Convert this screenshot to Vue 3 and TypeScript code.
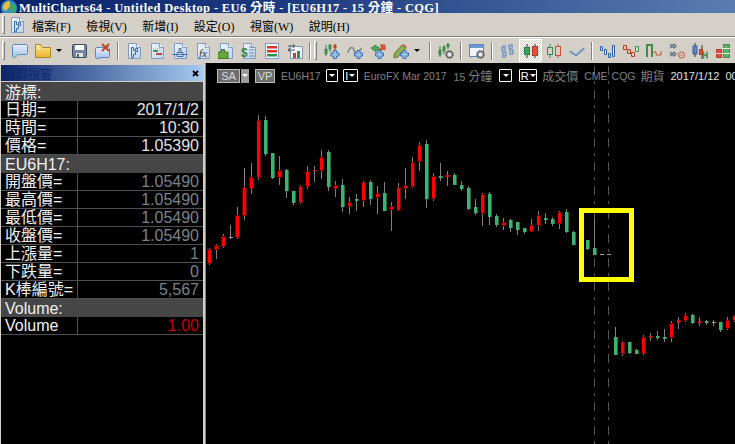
<script setup lang="ts">
/**
 * MultiCharts window: title/menu/toolbar chrome, the data window on the left
 * and the candlestick chart on the right.
 */
type Bar = {
  x: number;
  wickTop: number;
  wickBottom: number;
  bodyTop: number;
  bodyHeight: number;
  cap: number;
  leftEdge: boolean;
  fill: string;
  edge: string;
};
type Raw = [number, number, number, number, string];

// Bars were read off 3x crops, so the values are in third-pixels.
const toBars = (startX: number, originY: number, raw: Raw[], leftEdgeUntil = 0): Bar[] =>
  raw.map(([wt, bt, bb, wb, c], i) => {
    const y = (v: number) => Math.round(originY + v / 3);
    const bodyTop = y(bt);
    const bodyHeight = Math.max(1, y(bb) - bodyTop);
    return {
      x: startX + i * 7,
      wickTop: y(wt),
      wickBottom: y(wb),
      bodyTop,
      bodyHeight,
      cap: c === "r" && bodyHeight >= 4 ? 1 : 0,
      leftEdge: c === "r" && i < leftEdgeUntil,
      fill: c === "r" ? "#ff0000" : c === "g" ? "#3cb371" : "#a0a0a0",
      edge: c === "r" ? "#700000" : c === "g" ? "#1f6b45" : "#a0a0a0",
    };
  });

const firstRun = toBars(209, 100, [
  [445, 447, 493, 495, "r"], [433, 435, 450, 477, "r"], [403, 407, 441, 443, "r"], [375, 412, 415, 417, "n"],
  [321, 345, 415, 417, "r"], [205, 261, 348, 360, "r"], [189, 232, 267, 282, "r"], [45, 60, 235, 240, "r"],
  [48, 60, 162, 168, "g"], [159, 159, 235, 237, "g"], [168, 209, 234, 255, "r"], [208, 209, 273, 294, "g"],
  [273, 273, 309, 315, "g"], [255, 258, 310, 312, "r"], [198, 213, 261, 266, "r"], [198, 209, 213, 246, "r"],
  [150, 171, 213, 237, "r"], [150, 156, 261, 273, "g"], [243, 255, 267, 291, "r"], [237, 255, 321, 336, "g"],
  [291, 306, 321, 342, "r"], [282, 297, 303, 333, "g"], [243, 246, 303, 321, "r"], [240, 246, 297, 315, "g"],
  [258, 279, 295, 342, "r"], [246, 279, 333, 333, "g"], [306, 318, 330, 393, "r"],
], 7);

const secondRun = toBars(398, 130, [
  [159, 171, 243, 243, "r"], [114, 165, 177, 207, "r"], [81, 96, 171, 174, "r"], [36, 45, 96, 123, "r"],
  [30, 42, 207, 234, "g"], [129, 138, 207, 213, "r"], [99, 138, 144, 153, "g"], [123, 135, 141, 168, "r"],
  [129, 135, 165, 165, "g"], [153, 165, 177, 183, "g"], [168, 174, 237, 240, "g"], [207, 231, 249, 255, "g"],
  [189, 192, 252, 288, "r"], [186, 192, 261, 285, "g"], [252, 258, 285, 291, "g"], [264, 276, 288, 300, "r"],
  [267, 270, 294, 306, "g"], [276, 276, 300, 315, "g"], [294, 294, 306, 312, "g"], [267, 285, 306, 306, "r"],
  [243, 255, 288, 303, "r"], [249, 264, 270, 282, "g"], [261, 267, 282, 288, "g"], [243, 246, 282, 297, "r"],
  [237, 246, 306, 309, "g"], [303, 306, 345, 345, "g"],
]);

const lastBars = toBars(587, 130, [
  [330, 330, 357, 360, "g"], [264, 354, 375, 375, "g"],
]);

const afterGap = toBars(615, 300, [
  [81, 111, 165, 165, "g"], [123, 126, 162, 168, "r"], [126, 126, 159, 161, "g"], [147, 150, 162, 162, "g"],
  [105, 111, 162, 165, "r"], [99, 107, 115, 123, "r"], [93, 108, 114, 120, "g"], [87, 111, 117, 126, "g"],
  [63, 69, 114, 126, "r"], [51, 60, 69, 87, "r"], [40, 45, 63, 65, "r"], [42, 45, 69, 72, "g"],
  [51, 63, 69, 78, "r"], [60, 63, 69, 75, "g"], [60, 67, 69, 78, "n"], [66, 66, 90, 96, "g"],
  [51, 60, 87, 90, "r"], [45, 45, 63, 66, "r"],
]);

const bars = [...firstRun, ...secondRun, ...lastBars, ...afterGap];

const menus = ["檔案(F)", "檢視(V)", "新增(I)", "設定(O)", "視窗(W)", "說明(H)"];

type Tool = { kind: "icon" | "caret" | "sep" | "grip"; id?: string; on?: boolean };
const icon = (id: string, on = false): Tool => ({ kind: "icon", id, on });
const tools: Tool[] = [
  { kind: "grip" },
  icon("new"), icon("folder"), { kind: "caret" }, icon("save"), icon("del"),
  { kind: "sep" },
  icon("study"), icon("sig"), icon("scale"), icon("fx"), icon("puzzle"), icon("dollar"), icon("list"), icon("swap"),
  { kind: "sep" },
  { kind: "grip" },
  icon("addstudy"), icon("addwave"), icon("addarrow"), icon("addpen"), { kind: "caret" },
  { kind: "sep" },
  icon("gearbars"),
  { kind: "sep" },
  icon("gearwin"),
  { kind: "sep" },
  icon("ohlc"), icon("candle", true), icon("hollow"), icon("line"),
  { kind: "sep" },
  icon("pf"), icon("pfred"), icon("step"), icon("dots"), icon("mix"), icon("stack"),
];

type Row = { label: string; value?: string; tone?: string; head?: boolean };
const rows: Row[] = [
  { label: "游標:", head: true },
  { label: "日期=", value: "2017/1/2", tone: "bright" },
  { label: "時間=", value: "10:30", tone: "bright" },
  { label: "價格=", value: "1.05390", tone: "bright" },
  { label: "EU6H17:", head: true },
  { label: "開盤價=", value: "1.05490" },
  { label: "最高價=", value: "1.05490" },
  { label: "最低價=", value: "1.05490" },
  { label: "收盤價=", value: "1.05490" },
  { label: "上漲量=", value: "1" },
  { label: "下跌量=", value: "0" },
  { label: "K棒編號=", value: "5,567" },
  { label: "Volume:", head: true },
  { label: "Volume", value: "1.00", tone: "red" },
];
</script>

<template>
  <div class="app">
    <svg class="defs" width="0" height="0" aria-hidden="true">
      <defs>
        <linearGradient id="pg" x1="0" y1="0" x2="1" y2="1">
          <stop offset="0" stop-color="#f2f6fd" />
          <stop offset="1" stop-color="#bcd0ee" />
        </linearGradient>
        <linearGradient id="bub" x1="0" y1="0" x2="0" y2="1">
          <stop offset="0" stop-color="#e6effb" />
          <stop offset="1" stop-color="#a4c2ec" />
        </linearGradient>
        <linearGradient id="fold" x1="0" y1="0" x2="0" y2="1">
          <stop offset="0" stop-color="#ffe68c" />
          <stop offset="1" stop-color="#e9b22e" />
        </linearGradient>
        <symbol id="doc" viewBox="0 0 16 16">
          <path d="M2.5.5h8l4 4v11h-12z" fill="url(#pg)" stroke="#7f9bc6" />
          <path d="M10.5.5v4h4" fill="#fff" stroke="#7f9bc6" />
        </symbol>
        <symbol id="new" viewBox="0 0 16 16">
          <path d="M1.500 1.500h13l1 1v8l-1 1H6l-3 3H1.500l-1-1v-11z" fill="url(#bub)" stroke="#5b86c4" />
        </symbol>
        <symbol id="folder" viewBox="0 0 16 16">
          <path d="M.5 1.500h5l2 3h8v10H.5z" fill="url(#fold)" stroke="#a8872a" />
          <path d="M1.500 5.500h5" stroke="#fff0b0" />
        </symbol>
        <symbol id="save" viewBox="0 0 16 16">
          <rect x=".5" y="1.500" width="14" height="13" rx="1" fill="#75869c" stroke="#3f4c5f" />
          <rect x="3" y="2" width="9" height="5" fill="#fff" />
          <rect x="4" y="10" width="7" height="4" fill="#dfe4ea" />
          <rect x="5" y="11" width="2" height="3" fill="#4d5b70" />
        </symbol>
        <symbol id="del" viewBox="0 0 16 16">
          <path d="M1.500 4.500h12l1 1v8l-1 1H6l-3 1H1.500l-1-1v-9z" fill="url(#bub)" stroke="#5b86c4" />
          <path d="M7 1l7 7M14 1L7 8" stroke="#b5482f" stroke-width="2" />
        </symbol>
        <symbol id="study" viewBox="0 0 16 16">
          <use href="#doc" width="16" height="16" />
          <path d="M5.500 4.500h2v3h2v-2h2v3h-2v3h-2v3h-2z" fill="#cfe0f7" stroke="#356bb0" />
        </symbol>
        <symbol id="sig" viewBox="0 0 16 16">
          <use href="#doc" width="16" height="16" />
          <path d="M4 6h8" stroke="#9aa8bb" stroke-dasharray="1 1" />
          <rect x="4" y="7" width="5" height="2" fill="#45994a" />
          <rect x="7" y="10" width="6" height="2" fill="#b84a3a" />
        </symbol>
        <symbol id="scale" viewBox="0 0 16 16">
          <use href="#doc" width="16" height="16" />
          <path d="M.5 11.500h15M5 9.500h6v4H5zM7 5.500h2v4H7z" fill="#cfe0f7" stroke="#3f6fb0" />
        </symbol>
        <symbol id="fx" viewBox="0 0 16 16">
          <use href="#doc" width="16" height="16" />
          <text x="4" y="14" font-family="Liberation Serif, serif" font-style="italic" font-size="11" fill="#333">fx</text>
        </symbol>
        <symbol id="puzzle" viewBox="0 0 16 16">
          <use href="#doc" width="16" height="16" />
          <path d="M0 9h3.500V6.500h3V9H10v6.500H0z" fill="#66a63a" stroke="#3d7a20" />
        </symbol>
        <symbol id="dollar" viewBox="0 0 16 16">
          <use href="#doc" width="16" height="16" />
          <path d="M8 4h5M8 7h5M8 10h5M8 13h5" stroke="#6f86a8" />
          <text x="0" y="14" font-family="Liberation Sans, sans-serif" font-weight="700" font-size="12" fill="#3f8a3a">$</text>
        </symbol>
        <symbol id="list" viewBox="0 0 16 16">
          <rect x="1.500" y=".5" width="13" height="15" fill="#f4f6fb" stroke="#7f9bc6" />
          <rect x="3" y="3" width="10" height="2.500" fill="#d83a2a" />
          <rect x="3" y="7" width="10" height="2.500" fill="#d83a2a" />
          <rect x="3" y="11" width="10" height="2.500" fill="#2f8f4a" />
        </symbol>
        <symbol id="swap" viewBox="0 0 16 16">
          <rect x="3.500" y="3.500" width="12" height="12" fill="#f4f6fb" stroke="#7f9bc6" />
          <path d="M1 3h7M6 1l2 2-2 2M8 7H1M3 5L1 7l2 2" fill="none" stroke="#555" />
          <path d="M6 10h3v5H6z" fill="#d83a2a" />
          <path d="M10 8h3v7h-3z" fill="#2f8f4a" />
        </symbol>
        <symbol id="plus" viewBox="0 0 9 9">
          <path d="M3 .5h3v2.500h2.500v3H6v2.500H3V6H.5V3H3z" fill="#9cc0ea" stroke="#3a6fb5" />
        </symbol>
        <symbol id="gear" viewBox="0 0 9 9">
          <circle cx="4.500" cy="4.500" r="3" fill="#e8e8e8" stroke="#666" stroke-width="1.400" />
          <circle cx="4.500" cy="4.500" r="4" fill="none" stroke="#666" stroke-dasharray="1.500 1.200" />
        </symbol>
        <symbol id="addstudy" viewBox="0 0 16 16">
          <path d="M2 2v11M1 6h2v5H1zM6 1v8M5 2h2v4H5z" fill="#3fa05a" stroke="#3c8a4e" />
          <path d="M11 1v6M10 2h2v3h-2z" fill="#d8402a" stroke="#c8402a" />
          <use href="#plus" x="6" y="7" width="10" height="9" />
        </symbol>
        <symbol id="addwave" viewBox="0 0 16 16">
          <path d="M1 10c1-6 5-7 6-3s3 3 8-2" fill="none" stroke="#7d8a7a" stroke-width="1.500" />
          <use href="#plus" x="7" y="7" width="9" height="9" />
        </symbol>
        <symbol id="addarrow" viewBox="0 0 16 16">
          <path d="M1 5l5-3v2h3v3H6v2z" fill="#5aa860" stroke="#3f8a4a" />
          <path d="M9 7l3-3-2-2h5v5l-2-1-3 3z" fill="#e05a3a" stroke="#c04a2a" />
          <use href="#plus" x="5" y="7" width="9" height="9" />
        </symbol>
        <symbol id="addpen" viewBox="0 0 16 16">
          <path d="M1 11L9 2l4 3-8 9-4 1z" fill="#8cb050" stroke="#5c7f30" />
          <path d="M9 2l2-1 3 3-1 1z" fill="#d8605a" />
          <use href="#plus" x="7" y="7" width="9" height="9" />
        </symbol>
        <symbol id="gearbars" viewBox="0 0 16 16">
          <path d="M2 3v11M1 7h2v5H1zM6 2v9M5 4h2v4H5z" fill="#3fa05a" stroke="#3c8a4e" />
          <path d="M10 0v6M9 1h2v3H9z" fill="#3fa05a" stroke="#3c8a4e" />
          <use href="#gear" x="7" y="7" width="9" height="9" />
        </symbol>
        <symbol id="gearwin" viewBox="0 0 16 16">
          <rect x=".5" y="1.500" width="14" height="12" fill="#f0f4fb" stroke="#5f86bd" />
          <rect x="1" y="2" width="13" height="3" fill="#6f97d0" />
          <use href="#gear" x="7" y="7" width="9" height="9" />
        </symbol>
        <symbol id="ohlc" viewBox="0 0 16 16">
          <path d="M4 2v13M1 6h3M4 11h3M11 1v11M8 4h3M11 9h3" fill="none" stroke="#4a78b0" stroke-width="3" />
          <path d="M4 2v13M1 6h3M4 11h3M11 1v11M8 4h3M11 9h3" fill="none" stroke="#c8d8f0" />
        </symbol>
        <symbol id="candle" viewBox="0 0 16 16">
          <path d="M4 1v14M12 1v14" stroke="#333" />
          <rect x="1.500" y="4.500" width="5" height="7" fill="#3fa05a" stroke="#2f7f45" />
          <rect x="9.500" y="3.500" width="5" height="9" fill="#e0503a" stroke="#b03a2a" />
        </symbol>
        <symbol id="hollow" viewBox="0 0 16 16">
          <path d="M4 1v14" stroke="#3f8a4e" />
          <path d="M12 1v14" stroke="#c8503a" />
          <rect x="1.500" y="4.500" width="5" height="7" fill="#d4d0c8" stroke="#3f8a4e" />
          <rect x="9.500" y="3.500" width="5" height="9" fill="#d4d0c8" stroke="#c8503a" />
        </symbol>
        <symbol id="line" viewBox="0 0 16 16">
          <path d="M1 8l6 4 8-7" fill="none" stroke="#6f8db5" stroke-width="2.500" />
          <path d="M1 7l6 4 8-7" fill="none" stroke="#c0d0e5" />
        </symbol>
        <symbol id="pf" viewBox="0 0 16 16">
          <path d="M.5 3.500h2v4h-2zM4.500 6.500h2v5h-2zM8.500 10.500h2v4h-2zM12.500 2.500h2v11h-2z" fill="#cfe0f7" stroke="#2f62a8" />
        </symbol>
        <symbol id="pfred" viewBox="0 0 16 16">
          <path d="M.5 2.500h3v4h-3zM4.500 6.500h3v4h-3zM8.500 9.500h3v4h-3z" fill="#f0c0b0" stroke="#b83a2a" />
          <path d="M12.500 3.500h3v5h-3z" fill="#c8e8c0" stroke="#3f8a4e" />
        </symbol>
        <symbol id="step" viewBox="0 0 16 16">
          <path d="M1 14V2h5v12" fill="none" stroke="#3f8a4e" stroke-width="2" />
          <path d="M6 9h4v3h5V8" fill="none" stroke="#c0503a" stroke-width="1" />
        </symbol>
        <symbol id="dots" viewBox="0 0 16 16">
          <path d="M1 1l2 2 2-2M1 5l2-2 2 2M1 9l2 2 2-2M1 13l2-2 2 2M5 1L7 3 5 5M5 9l2 2-2 2" fill="none" stroke="#6a7482" stroke-width="1.500" />
          <circle cx="12.500" cy="12" r="3" fill="none" stroke="#c0503a" />
          <circle cx="12.500" cy="12" r=".8" fill="#c0503a" />
        </symbol>
        <symbol id="mix" viewBox="0 0 16 16">
          <path d="M3 0v14M10 2v14" stroke="#333" />
          <rect x="1" y="3" width="4" height="8" fill="#5f86c0" stroke="#3a5f98" />
          <rect x="7.500" y="6.500" width="3" height="5" fill="#e0503a" stroke="#b03a2a" />
          <path d="M11.500 8.500v7M15 8.500v7M11.500 12h3.500" stroke="#3f8a4e" stroke-width="1.500" />
        </symbol>
        <symbol id="stack" viewBox="0 0 16 16">
          <path d="M1.500 6.500h5v8h-5z" fill="#e0503a" stroke="#b03a2a" />
          <path d="M1 10.500h6" stroke="#f4d0c8" />
          <path d="M8.500 1.500h6v13h-6z" fill="#5cb068" stroke="#3f8a4e" />
          <path d="M8 5.500h7M8 10.500h7" stroke="#d8f0d8" />
        </symbol>
      </defs>
    </svg>

    <header class="titlebar">
      <svg class="app-logo" viewBox="0 0 18 13" width="18" height="13" aria-hidden="true">
        <circle cx="9" cy="8" r="8" fill="#2f8fc8" />
        <path d="M3 9a7 7 0 0 1 6-8l2 4-5 6z" fill="#f2b83a" />
        <path d="M10 3l6 3v6H9z" fill="#3aa860" />
      </svg>
      <span class="title-text">MultiCharts64 - Untitled Desktop - EU6 分時 - [EU6H17 - 15 分鐘 - CQG]</span>
    </header>

    <nav class="menubar">
      <span class="grip" />
      <svg class="menu-icon" width="16" height="16" aria-hidden="true"><use href="#study" width="16" height="16" /></svg>
      <span v-for="m in menus" :key="m" class="menu-item">{{ m }}</span>
    </nav>

    <div class="toolbar">
      <template v-for="(t, i) in tools" :key="i">
        <span v-if="t.kind === 'grip'" class="grip tool-grip" />
        <span v-else-if="t.kind === 'sep'" class="sep" />
        <span v-else-if="t.kind === 'caret'" class="caret" />
        <span v-else class="tool" :class="{ on: t.on }">
          <svg width="16" height="16" aria-hidden="true"><use :href="'#' + t.id" width="16" height="16" /></svg>
        </span>
      </template>
    </div>

    <main class="workspace">
      <aside class="data-window">
        <div class="dw-title">
          <span>資料視窗</span>
          <svg class="dw-close" viewBox="0 0 7 7" width="7" height="7" aria-hidden="true">
            <path d="M1 1l5 5M6 1L1 6" stroke="#000" stroke-width="1.800" />
          </svg>
        </div>
        <div class="dw-body">
          <div v-for="r in rows" :key="r.label" class="dw-row" :class="{ head: r.head }">
            <span class="dw-label">{{ r.label }}</span>
            <span v-if="!r.head" class="dw-value" :class="r.tone">{{ r.value }}</span>
          </div>
        </div>
      </aside>

      <section class="chart">
        <svg class="plot" viewBox="206 63 529 381" width="529" height="381" aria-hidden="true" shape-rendering="crispEdges">
          <g v-for="x in [594, 608]" :key="x">
            <line :x1="x + 0.5" :x2="x + 0.5" y1="66" y2="444" stroke="#555" stroke-dasharray="9 6 3 6" />
          </g>
          <g v-for="(b, i) in bars" :key="i">
            <rect :x="b.x" :y="b.wickTop" width="1" :height="b.wickBottom - b.wickTop" fill="#808080" />
            <rect :x="b.x - (b.leftEdge ? 2 : 1)" :y="b.bodyTop" :width="b.leftEdge ? 5 : 4" :height="b.bodyHeight" :fill="b.edge" />
            <rect :x="b.x - 1" :y="b.bodyTop + b.cap" width="3" :height="b.bodyHeight - b.cap * 2" :fill="b.fill" />
          </g>
          <rect x="600" y="254" width="4" height="1" fill="#a0a0a0" />
          <rect x="607" y="254" width="4" height="1" fill="#a0a0a0" />
        </svg>

        <div class="chart-head">
          <span class="chip sa">SA</span>
          <span class="chip sa-caret"><i /></span>
          <span class="chip vp">VP</span>
          <span class="muted sym">EU6H17</span>
          <span class="drop d1"><i /></span>
          <span class="drop d2">I<i /></span>
          <span class="muted desc">EuroFX Mar 2017</span>
          <span class="muted res">15 <span class="cjk">分鐘</span></span>
          <span class="drop d3"><i /></span>
          <span class="drop d4">R<i /></span>
          <span class="muted cjk kind">成交價</span>
          <span class="muted ex">CME</span>
          <span class="muted feed">CQG</span>
          <span class="muted cjk type">期貨</span>
          <span class="stamp date">2017/1/12</span>
          <span class="stamp time">00:00</span>
        </div>

        <div class="highlight" />
      </section>
    </main>
  </div>
</template>

<style scoped>
.app {
  width: 735px;
  height: 444px;
  display: flex;
  flex-direction: column;
  overflow: hidden;
  background: #d4d0c8;
  font-family: "Liberation Sans", "Noto Sans CJK TC", sans-serif;
}
.defs {
  position: absolute;
}

/* ─── Title, menu ────────────────────────────────────────────────────── */
.titlebar {
  height: 13px;
  flex: none;
  display: flex;
  align-items: center;
  overflow: hidden;
  background: linear-gradient(90deg, #0a246a 0%, #1d3a80 40%, #5a7db0 100%);
}
.app-logo {
  flex: none;
  margin-right: 1px;
}
.title-text {
  font: 700 12.5px "Liberation Serif", "Noto Sans CJK TC", serif;
  letter-spacing: 0.35px;
  color: #fff;
  white-space: nowrap;
}
.menubar {
  height: 23px;
  flex: none;
  display: flex;
  align-items: center;
  padding-left: 2px;
  border-bottom: 1px solid #808080;
}
.grip {
  width: 1px;
  height: 17px;
  border: 1px solid;
  border-color: #fff #808080 #808080 #fff;
  flex: none;
}
.menu-icon {
  margin: 0 7px 0 4px;
  flex: none;
}
.menu-item {
  font: 12px "Liberation Serif", "Noto Sans CJK TC", serif;
  color: #000;
  margin-right: 15.5px;
  flex: none;
  white-space: nowrap;
  position: relative;
  top: 1px;
}

/* ─── Toolbar ────────────────────────────────────────────────────────── */
.toolbar {
  height: 25px;
  flex: none;
  display: flex;
  align-items: center;
  padding-left: 2px;
  border-top: 1px solid #fff;
}
.tool-grip {
  margin-right: 3px;
}
.tool {
  width: 23px;
  height: 23px;
  flex: none;
  display: flex;
  align-items: center;
  justify-content: center;
}
.tool.on {
  background: repeating-conic-gradient(#fff 0 25%, #d4d0c8 0 50%) 0 0 / 2px 2px;
  box-shadow: inset 1px 1px #fff, inset -1px -1px #fff;
}
.caret {
  width: 0;
  height: 0;
  flex: none;
  margin: 0 6px 0 2px;
  border: 3px solid transparent;
  border-top: 3px solid #000;
  border-bottom: 0;
}
.sep {
  width: 1px;
  height: 18px;
  flex: none;
  margin: 0 3px;
  background: #808080;
  border-right: 1px solid #fff;
}

/* ─── Data window ────────────────────────────────────────────────────── */
.workspace {
  flex: 1;
  min-height: 0;
  display: flex;
}
.data-window {
  width: 202px;
  flex: none;
  display: flex;
  flex-direction: column;
  margin: 2px 2px 0 1px;
}
.dw-title {
  height: 16px;
  flex: none;
  display: flex;
  align-items: center;
  justify-content: space-between;
  padding: 0 4px 0 3px;
  margin-bottom: 1px;
  font-size: 12px;
  color: #12286a;
  background: linear-gradient(90deg, #0a246a, #a6caf0);
}
.dw-body {
  flex: 1;
  background: #000;
}
.dw-row {
  height: 18px;
  box-sizing: border-box;
  display: flex;
  align-items: center;
  border-bottom: 1px solid #505050;
  font-size: 16px;
  line-height: 17px;
  color: #f0f0f0;
  white-space: nowrap;
}
.dw-row:first-child {
  height: 19px;
  padding-top: 1px;
}
.dw-row.head {
  background: #464646;
  border-bottom: 0;
}
.dw-label {
  width: 76px;
  flex: none;
  padding-left: 4px;
  box-sizing: border-box;
}
.dw-row.head .dw-label {
  width: auto;
}
.dw-value {
  flex: 1;
  height: 100%;
  text-align: right;
  padding-right: 4px;
  border-left: 1px solid #505050;
  color: #7c8288;
}
.dw-value.bright {
  color: #e4e4e4;
}
.dw-value.red {
  color: #c80000;
}

/* ─── Chart ──────────────────────────────────────────────────────────── */
.chart {
  position: relative;
  flex: 1;
  background: #000;
  border-left: 1px solid #808080;
  overflow: hidden;
}
.plot {
  position: absolute;
  left: 0;
  top: 0;
  display: block;
}
.chart-head {
  position: relative;
  height: 19px;
  display: flex;
  align-items: center;
  padding: 3px 0 0 11px;
  font-size: 10.5px;
  white-space: nowrap;
  color: #808080;
}
.chip {
  height: 14px;
  display: inline-flex;
  align-items: center;
  justify-content: center;
  box-sizing: border-box;
  border: 1px solid #bbb;
  background: #6e6e6e;
  color: #dcdcdc;
  font-size: 11px;
  flex: none;
}
.sa {
  width: 23px;
}
.sa-caret {
  width: 8px;
  margin-left: 1px;
  border: 0;
  background: #9a9a9a;
}
.sa-caret i {
  border: 3px solid transparent;
  border-top: 3px solid #fff;
  border-bottom: 0;
}
.vp {
  width: 20px;
  margin-left: 6px;
}
.muted {
  flex: none;
}
.cjk {
  font-size: 12px;
}
.sym { margin-left: 6px; }
.d1 { width: 12px; margin-left: 5px; }
.d2 { width: 15px; margin-left: 5px; }
.desc { margin-left: 6px; }
.res { margin-left: 7px; }
.d3 { width: 13px; margin-left: 7px; }
.d4 { width: 18px; margin-left: 7px; }
.kind { margin-left: 5px; }
.ex { margin-left: 6px; }
.feed { margin-left: 4px; }
.type { margin-left: 5px; }
.date { margin-left: 6px; }
.time { margin-left: 6px; }
.drop {
  height: 13px;
  flex: none;
  box-sizing: border-box;
  border: 1px solid #fff;
  border-radius: 1px;
  display: inline-flex;
  align-items: center;
  justify-content: center;
  gap: 1px;
  color: #fff;
  font-size: 11px;
}
.drop i {
  width: 0;
  height: 0;
  border: 3px solid transparent;
  border-top: 3px solid #fff;
  border-bottom: 0;
}
.stamp {
  color: #e0e0e0;
  font-size: 11px;
  flex: none;
}

/* Yellow marker drawn over the plot */
.highlight {
  position: absolute;
  left: 373px;
  top: 145px;
  width: 55px;
  height: 74px;
  box-sizing: border-box;
  border: 5px solid #ffff00;
}
</style>
